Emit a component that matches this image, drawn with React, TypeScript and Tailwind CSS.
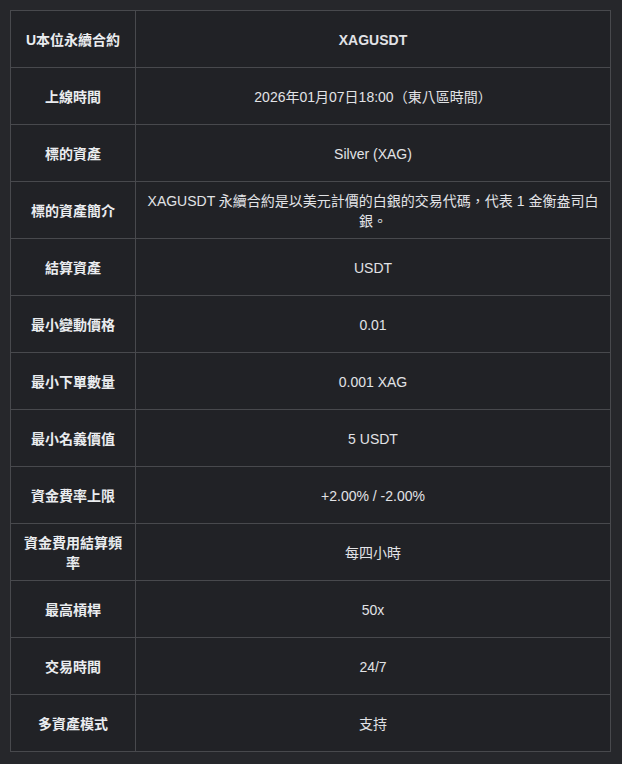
const rows: [string, string][] = [
  ["U本位永續合約", "XAGUSDT"],
  ["上線時間", "2026年01月07日18:00（東八區時間）"],
  ["標的資產", "Silver (XAG)"],
  ["標的資產簡介", "XAGUSDT 永續合約是以美元計價的白銀的交易代碼，代表 1 金衡盎司白銀。"],
  ["結算資產", "USDT"],
  ["最小變動價格", "0.01"],
  ["最小下單數量", "0.001 XAG"],
  ["最小名義價值", "5 USDT"],
  ["資金費率上限", "+2.00% / -2.00%"],
  ["資金費用結算頻率", "每四小時"],
  ["最高槓桿", "50x"],
  ["交易時間", "24/7"],
  ["多資產模式", "支持"],
]

export default function App() {
  return (
    <div
      className="min-h-[764px] w-[622px] bg-[#26272b] p-[10px] text-[14px] leading-[20px] text-[#eaecef]"
      style={{ fontFamily: '"Liberation Sans", "Noto Sans CJK TC", sans-serif' }}
    >
      <table className="w-[601px] table-fixed border-collapse bg-[#212226]">
        <colgroup>
          <col className="w-[125px]" />
          <col />
        </colgroup>
        <tbody>
          {rows.map(([label, value], i) => (
            <tr key={label}>
              <td className="h-[57px] border border-[#48494d] px-[10px] pt-[2px] text-center align-middle font-bold">
                {label}
              </td>
              <td
                className={`h-[57px] border border-[#48494d] px-[10px] pt-[2px] text-center align-middle text-[#e2e3e6] ${
                  i === 0 ? "font-bold" : ""
                }`}
              >
                {value}
              </td>
            </tr>
          ))}
        </tbody>
      </table>
    </div>
  )
}
